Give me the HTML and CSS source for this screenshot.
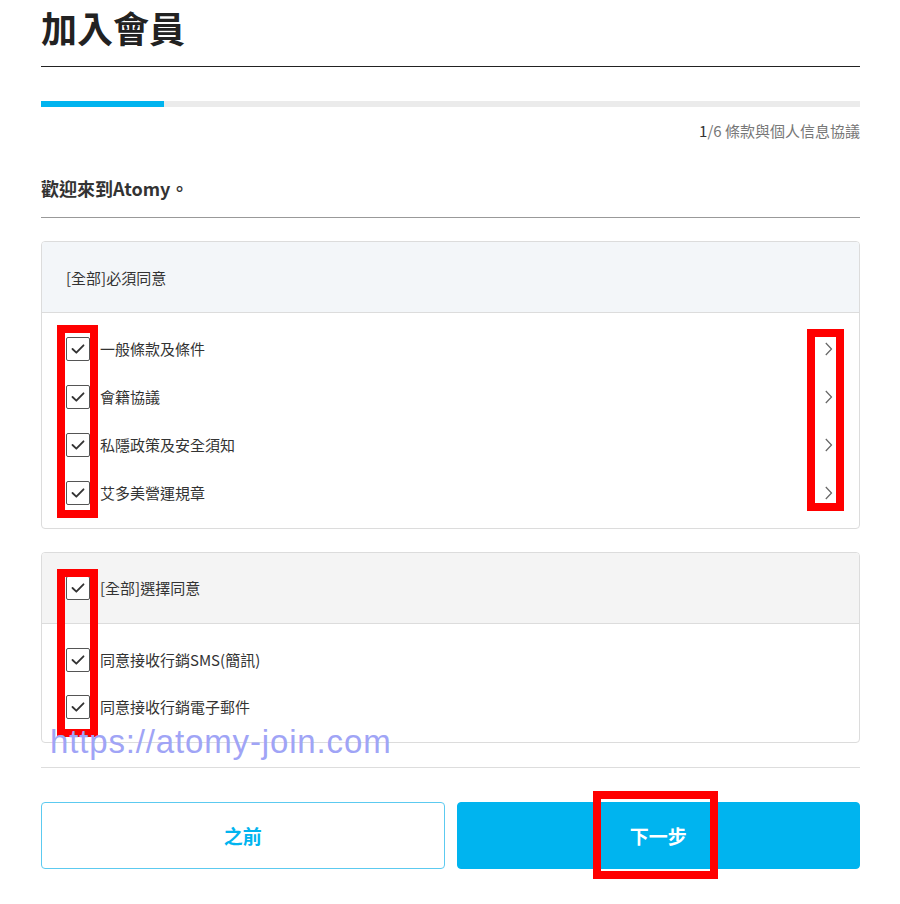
FILE: index.html
```html
<!DOCTYPE html>
<html lang="zh-Hant">
<head>
<meta charset="utf-8">
<title>加入會員</title>
<link rel="stylesheet" href="styles.css">
</head>
<body>
<div class="page">
  <h1 class="title">加入會員</h1>
  <div class="progress"><div class="progress-fill" style="width:15%"></div></div>
  <div class="step"><span class="step-now">1</span>/6 條款與個人信息協議</div>
  <div class="welcome">歡迎來到Atomy。</div>

  <section class="box">
    <div class="box-head box-head-blue">
      <span class="head-text">[全部]必須同意</span>
    </div>
    <ul class="box-body">
      <li class="row">
        <span class="check"><svg viewBox="0 0 24 24" width="24" height="24"><path d="M6 12 L10.2 16 L18 8" fill="none" stroke="#333" stroke-width="2" stroke-linecap="round" stroke-linejoin="round"/></svg></span>
        <span class="label">一般條款及條件</span>
        <svg class="chev" viewBox="0 0 10 14" width="10" height="14"><path d="M0.8 1 L6.5 7 L0.8 13" fill="none" stroke="#666" stroke-width="1.2"/></svg>
      </li>
      <li class="row">
        <span class="check"><svg viewBox="0 0 24 24" width="24" height="24"><path d="M6 12 L10.2 16 L18 8" fill="none" stroke="#333" stroke-width="2" stroke-linecap="round" stroke-linejoin="round"/></svg></span>
        <span class="label">會籍協議</span>
        <svg class="chev" viewBox="0 0 10 14" width="10" height="14"><path d="M0.8 1 L6.5 7 L0.8 13" fill="none" stroke="#666" stroke-width="1.2"/></svg>
      </li>
      <li class="row">
        <span class="check"><svg viewBox="0 0 24 24" width="24" height="24"><path d="M6 12 L10.2 16 L18 8" fill="none" stroke="#333" stroke-width="2" stroke-linecap="round" stroke-linejoin="round"/></svg></span>
        <span class="label">私隱政策及安全須知</span>
        <svg class="chev" viewBox="0 0 10 14" width="10" height="14"><path d="M0.8 1 L6.5 7 L0.8 13" fill="none" stroke="#666" stroke-width="1.2"/></svg>
      </li>
      <li class="row">
        <span class="check"><svg viewBox="0 0 24 24" width="24" height="24"><path d="M6 12 L10.2 16 L18 8" fill="none" stroke="#333" stroke-width="2" stroke-linecap="round" stroke-linejoin="round"/></svg></span>
        <span class="label">艾多美營運規章</span>
        <svg class="chev" viewBox="0 0 10 14" width="10" height="14"><path d="M0.8 1 L6.5 7 L0.8 13" fill="none" stroke="#666" stroke-width="1.2"/></svg>
      </li>
    </ul>
  </section>

  <section class="box box-second">
    <div class="box-head box-head-grey">
      <span class="check"><svg viewBox="0 0 24 24" width="24" height="24"><path d="M6 12 L10.2 16 L18 8" fill="none" stroke="#333" stroke-width="2" stroke-linecap="round" stroke-linejoin="round"/></svg></span>
      <span class="label">[全部]選擇同意</span>
    </div>
    <ul class="box-body box-body-tight">
      <li class="row">
        <span class="check"><svg viewBox="0 0 24 24" width="24" height="24"><path d="M6 12 L10.2 16 L18 8" fill="none" stroke="#333" stroke-width="2" stroke-linecap="round" stroke-linejoin="round"/></svg></span>
        <span class="label">同意接收行銷SMS(簡訊)</span>
      </li>
      <li class="row">
        <span class="check"><svg viewBox="0 0 24 24" width="24" height="24"><path d="M6 12 L10.2 16 L18 8" fill="none" stroke="#333" stroke-width="2" stroke-linecap="round" stroke-linejoin="round"/></svg></span>
        <span class="label">同意接收行銷電子郵件</span>
      </li>
    </ul>
  </section>

  <div class="divider"></div>

  <div class="actions">
    <button class="btn btn-prev">之前</button>
    <button class="btn btn-next">下一步</button>
  </div>
</div>

<div class="mark mark-1"></div>
<div class="mark mark-2"></div>
<div class="mark mark-3"></div>
<div class="mark mark-4"></div>
<div class="watermark">https://atomy-join.com</div>
</body>
</html>
```

FILE: styles.css
```css
* { box-sizing: border-box; }
html, body { margin: 0; padding: 0; background: #fff; }
body {
  font-family: "Noto Sans CJK TC", "Noto Sans CJK SC", "Noto Sans", sans-serif;
  color: #333;
  position: relative;
  width: 900px;
  min-height: 904px;
}
.page {
  padding: 0 40px 0 41px;
}
.title {
  margin: 0;
  padding: 5px 0 17px;
  font-size: 36px;
  line-height: 44px;
  font-weight: 700;
  color: #222;
  border-bottom: 1px solid #222;
}
.progress {
  margin-top: 34px;
  height: 6px;
  background: #ebebeb;
}
.progress-fill {
  height: 100%;
  background: #00b4ef;
}
.step {
  margin-top: 14px;
  text-align: right;
  font-size: 15px;
  line-height: 20px;
  color: #777;
}
.step-now { color: #333; }
.welcome {
  padding: 34px 0 16px;
  font-size: 18px;
  line-height: 26px;
  font-weight: 700;
  color: #333;
  border-bottom: 1px solid #999;
}
.box {
  margin-top: 23px;
  border: 1px solid #dcdcdc;
  border-radius: 4px;
  overflow: hidden;
}
.box-head {
  height: 71px;
  padding: 0 24px;
  display: flex;
  align-items: center;
  gap: 10px;
  border-bottom: 1px solid #dcdcdc;
  font-size: 15px;
}
.box-head-blue { background: #f3f6f9; }
.box-head-grey { background: #f4f4f4; }
.head-text { color: #333; }
.box-body {
  list-style: none;
  margin: 0;
  padding: 24px 24px 23px;
  display: flex;
  flex-direction: column;
  gap: 24px;
}
.box-body-tight { gap: 23px; }
.row {
  height: 24px;
  display: flex;
  align-items: center;
  gap: 10px;
  font-size: 15px;
}
.label { flex: 1; color: #333; line-height: 24px; }
.check {
  width: 24px;
  height: 24px;
  flex: none;
  border: 1px solid #555;
  border-radius: 2px;
  background: #fff;
  display: flex;
  align-items: center;
  justify-content: center;
}
.check svg { display: block; width: 22px; height: 22px; }
.chev { flex: none; display: block; }
.divider {
  margin-top: 24px;
  border-top: 1px solid #dddddd;
}
.actions {
  margin-top: 34px;
  display: grid;
  grid-template-columns: 1fr 1fr;
  gap: 12px;
}
.btn {
  height: 67px;
  border-radius: 4px;
  font-family: inherit;
  font-size: 19px;
  font-weight: 700;
  cursor: pointer;
}
.btn-prev {
  background: #fff;
  border: 1px solid #5ccaf0;
  color: #00b4ef;
}
.btn-next {
  background: #00b4ef;
  border: 1px solid #00b4ef;
  color: #fff;
}
.mark {
  position: absolute;
  border: 8px solid #ff0000;
  pointer-events: none;
}
.mark-1 { left: 57px; top: 325px; width: 41px; height: 193px; }
.mark-2 { left: 807px; top: 329px; width: 37px; height: 182px; }
.mark-3 { left: 57px; top: 569px; width: 41px; height: 168px; }
.mark-4 { left: 593px; top: 791px; width: 125px; height: 88px; }
.watermark {
  position: absolute;
  left: 50px;
  top: 725px;
  font-family: "Liberation Sans", Arial, sans-serif;
  font-size: 33px;
  line-height: 33px;
  letter-spacing: 0.85px;
  color: #a0a4f6;
  pointer-events: none;
  white-space: nowrap;
}
```
